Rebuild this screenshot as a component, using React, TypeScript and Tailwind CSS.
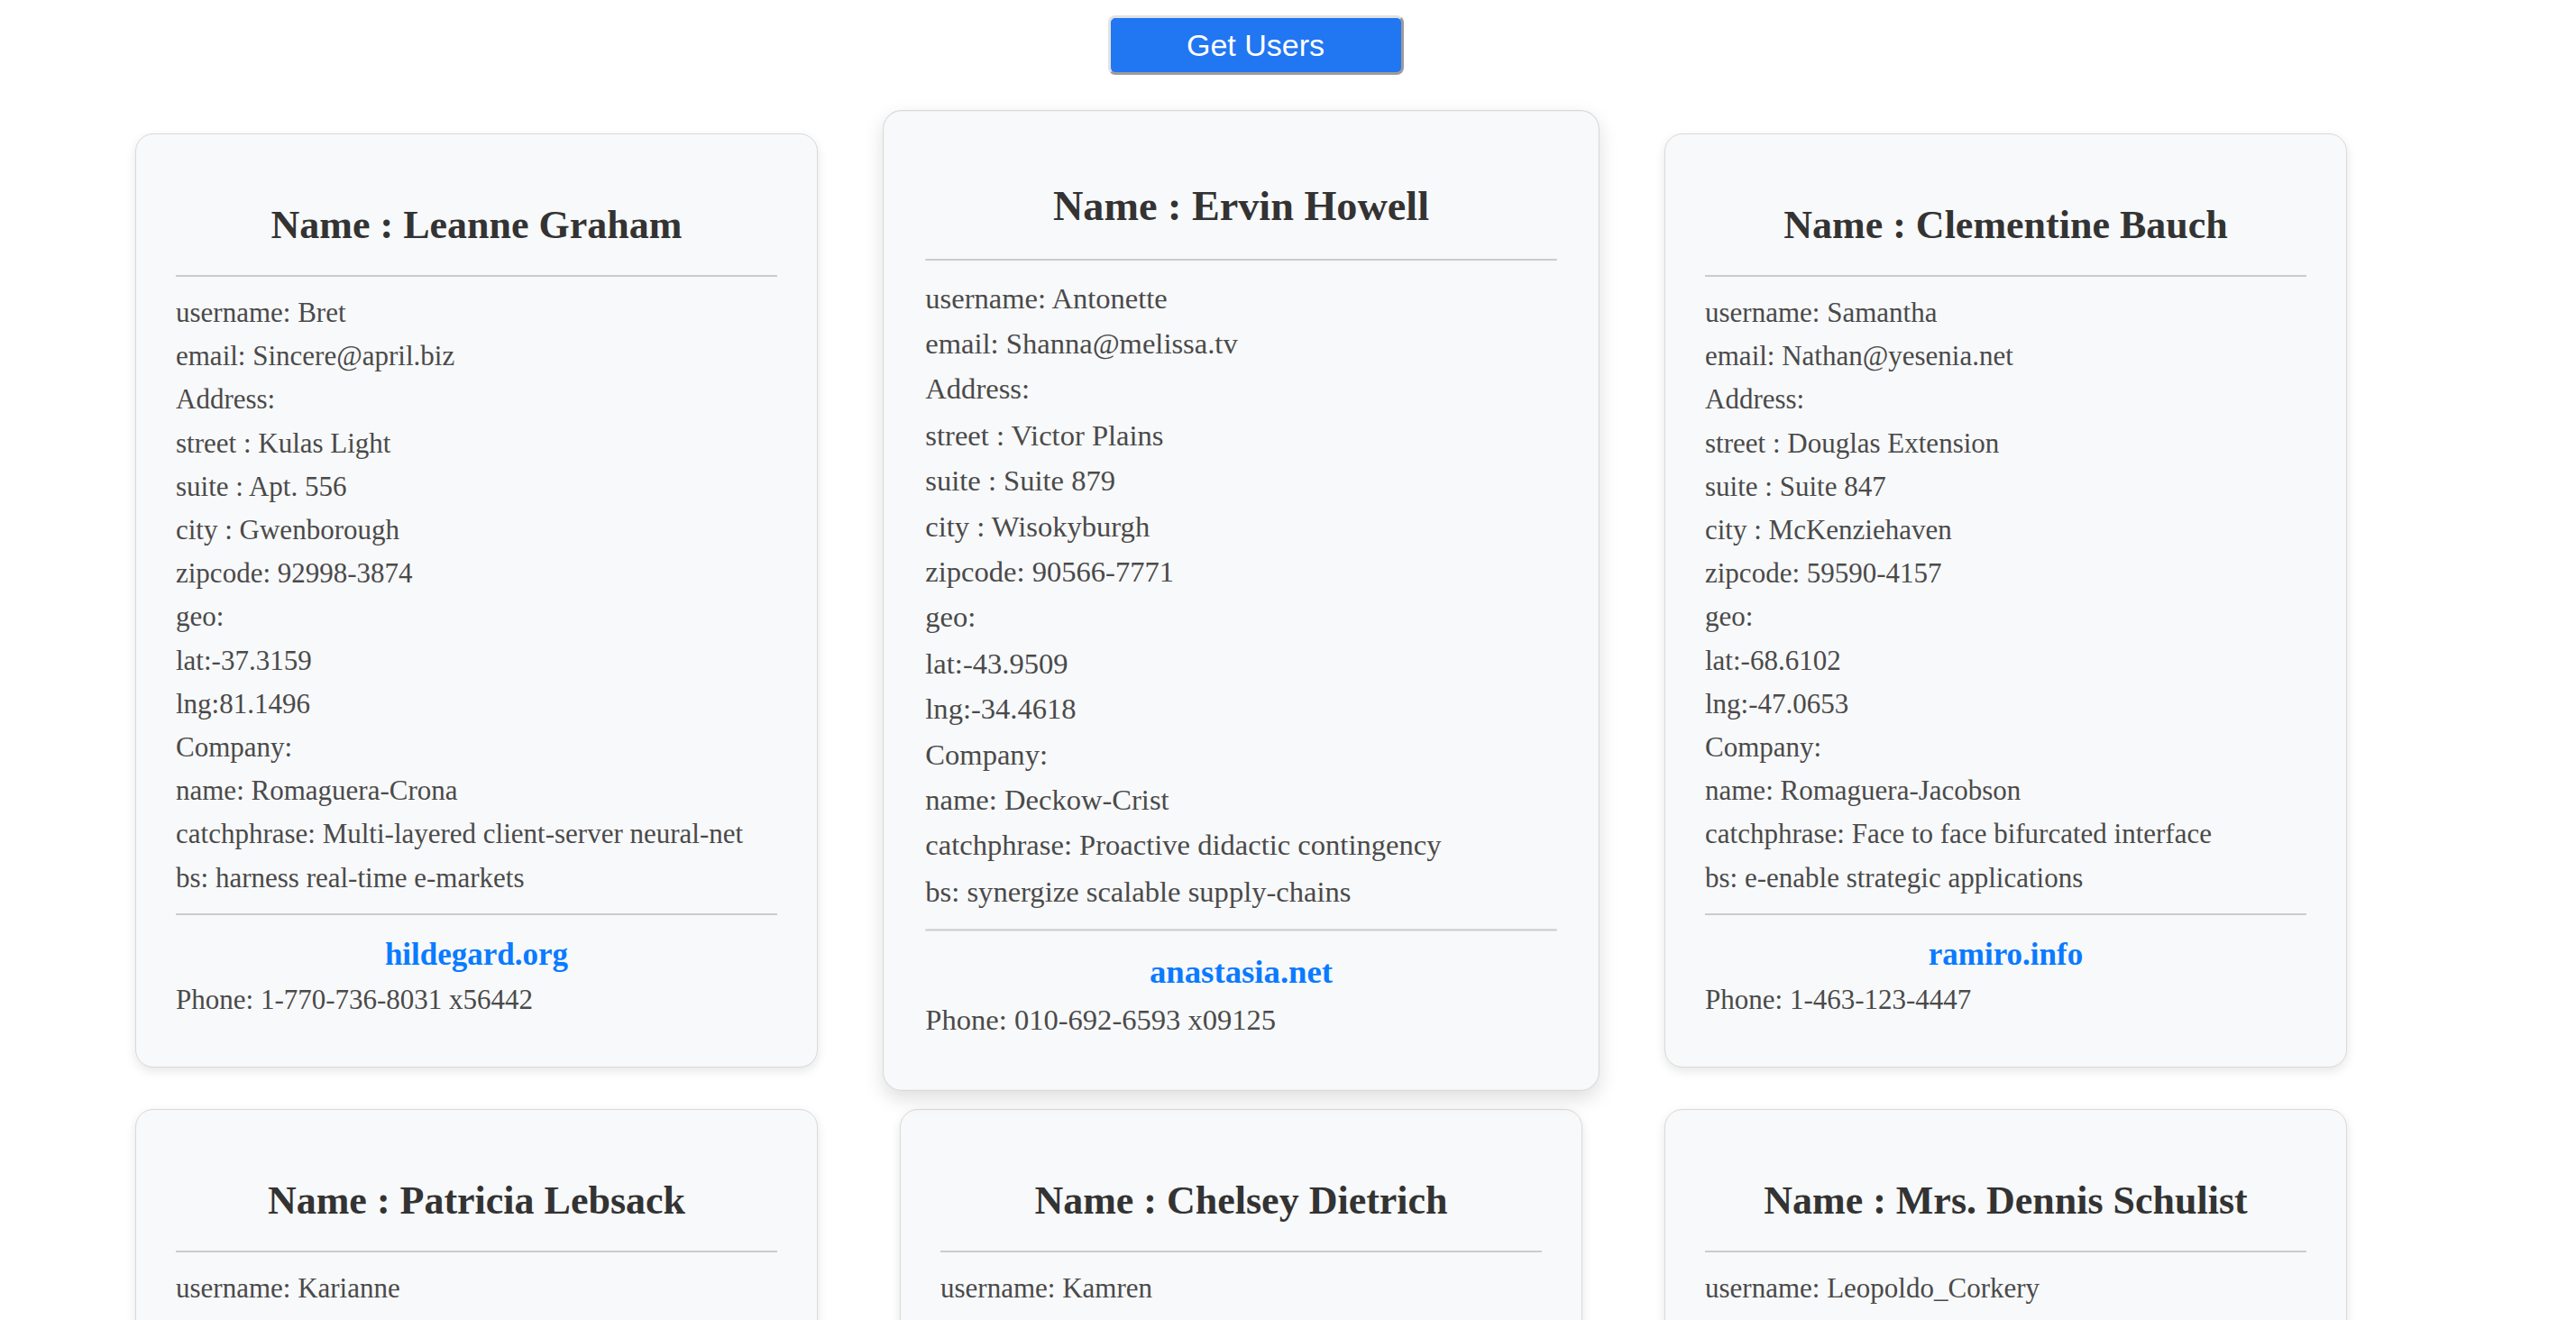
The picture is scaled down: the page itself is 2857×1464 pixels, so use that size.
import React from 'react';

const users = [
  {
    id: 1,
    name: 'Leanne Graham',
    username: 'Bret',
    email: 'Sincere@april.biz',
    address: { street: 'Kulas Light', suite: 'Apt. 556', city: 'Gwenborough', zipcode: '92998-3874', geo: { lat: '-37.3159', lng: '81.1496' } },
    phone: '1-770-736-8031 x56442',
    website: 'hildegard.org',
    company: { name: 'Romaguera-Crona', catchPhrase: 'Multi-layered client-server neural-net', bs: 'harness real-time e-markets' },
  },
  {
    id: 2,
    name: 'Ervin Howell',
    username: 'Antonette',
    email: 'Shanna@melissa.tv',
    address: { street: 'Victor Plains', suite: 'Suite 879', city: 'Wisokyburgh', zipcode: '90566-7771', geo: { lat: '-43.9509', lng: '-34.4618' } },
    phone: '010-692-6593 x09125',
    website: 'anastasia.net',
    company: { name: 'Deckow-Crist', catchPhrase: 'Proactive didactic contingency', bs: 'synergize scalable supply-chains' },
  },
  {
    id: 3,
    name: 'Clementine Bauch',
    username: 'Samantha',
    email: 'Nathan@yesenia.net',
    address: { street: 'Douglas Extension', suite: 'Suite 847', city: 'McKenziehaven', zipcode: '59590-4157', geo: { lat: '-68.6102', lng: '-47.0653' } },
    phone: '1-463-123-4447',
    website: 'ramiro.info',
    company: { name: 'Romaguera-Jacobson', catchPhrase: 'Face to face bifurcated interface', bs: 'e-enable strategic applications' },
  },
  {
    id: 4,
    name: 'Patricia Lebsack',
    username: 'Karianne',
    email: 'Julianne.OConner@kory.org',
    address: { street: 'Hoeger Mall', suite: 'Apt. 692', city: 'South Elvis', zipcode: '53919-4257', geo: { lat: '29.4572', lng: '-164.2990' } },
    phone: '493-170-9623 x156',
    website: 'kale.biz',
    company: { name: 'Robel-Corkery', catchPhrase: 'Multi-tiered zero tolerance productivity', bs: 'transition cutting-edge web services' },
  },
  {
    id: 5,
    name: 'Chelsey Dietrich',
    username: 'Kamren',
    email: 'Lucio_Hettinger@annie.ca',
    address: { street: 'Skiles Walks', suite: 'Suite 351', city: 'Roscoeview', zipcode: '33263', geo: { lat: '-31.8129', lng: '62.5342' } },
    phone: '(254)954-1289',
    website: 'demarco.info',
    company: { name: 'Keebler LLC', catchPhrase: 'User-centric fault-tolerant solution', bs: 'revolutionize end-to-end systems' },
  },
  {
    id: 6,
    name: 'Mrs. Dennis Schulist',
    username: 'Leopoldo_Corkery',
    email: 'Karley_Dach@jasper.info',
    address: { street: 'Norberto Crossing', suite: 'Apt. 950', city: 'South Christy', zipcode: '23505-1337', geo: { lat: '-71.4197', lng: '71.7478' } },
    phone: '1-477-935-8478 x6430',
    website: 'ola.org',
    company: { name: 'Considine-Lockman', catchPhrase: 'Synchronised bottom-line interface', bs: 'e-enable innovative applications' },
  },
];

function UserCard({ user, hovered }: { user: any; hovered?: boolean }) {
  const lines = [
    `username: ${user.username}`,
    `email: ${user.email}`,
    'Address:',
    `street : ${user.address.street}`,
    `suite : ${user.address.suite}`,
    `city : ${user.address.city}`,
    `zipcode: ${user.address.zipcode}`,
    'geo:',
    `lat:${user.address.geo.lat}`,
    `lng:${user.address.geo.lng}`,
    'Company:',
    `name: ${user.company.name}`,
    `catchphrase: ${user.company.catchPhrase}`,
    `bs: ${user.company.bs}`,
  ];

  return (
    <div
      className={
        hovered
          ? 'w-[757px] rounded-[20px] border border-[#d9d9d9] bg-[#f8f9fa] px-[44px] pt-[75px] pb-[50px] shadow-[0_8px_20px_rgba(0,0,0,0.13)] scale-105'
          : 'w-[757px] rounded-[20px] border border-[#d9d9d9] bg-[#f8f9fa] px-[44px] pt-[75px] pb-[50px] shadow-[0_4px_12px_rgba(0,0,0,0.1)]'
      }
    >
      <h2 className="text-center text-[44px] font-bold leading-[52px] text-[#333]">Name : {user.name}</h2>
      <div className="mt-[29px] h-[2px] bg-[#cccccc]" />
      <div className="mt-[16px] text-[31px] leading-[48.2px] text-[#4a4a4a]">
        {lines.map((line) => (
          <p key={line}>{line}</p>
        ))}
      </div>
      <div className="mt-[15px] h-[2px] bg-[#cccccc]" />
      <p className="mt-[20px] text-center text-[35px] font-bold leading-[48px] text-[#0a7bff]">{user.website}</p>
      <p className="mt-[2px] text-[31px] leading-[48px] text-[#4a4a4a]">Phone: {user.phone}</p>
    </div>
  );
}

export default function App() {
  return (
    <div className="min-h-screen bg-white font-['Liberation_Serif','Times_New_Roman',serif]">
      <div className="flex justify-center pr-[72px] pt-[17px]">
        <button className="h-[66px] w-[328px] rounded-[8px] border-[3px] border-t-[#e2e2e2] border-l-[#e2e2e2] border-r-[#9c9c9c] border-b-[#9c9c9c] bg-[#2176f2] font-['Liberation_Sans',Arial,sans-serif] text-[34px] text-white">
          Get Users
        </button>
      </div>

      <div className="mt-[65px] grid w-max grid-cols-3 gap-x-[91px] gap-y-[46px] pl-[150px]">
        {users.map((user) => (
          <UserCard key={user.id} user={user} hovered={user.id === 2} />
        ))}
      </div>
    </div>
  );
}
